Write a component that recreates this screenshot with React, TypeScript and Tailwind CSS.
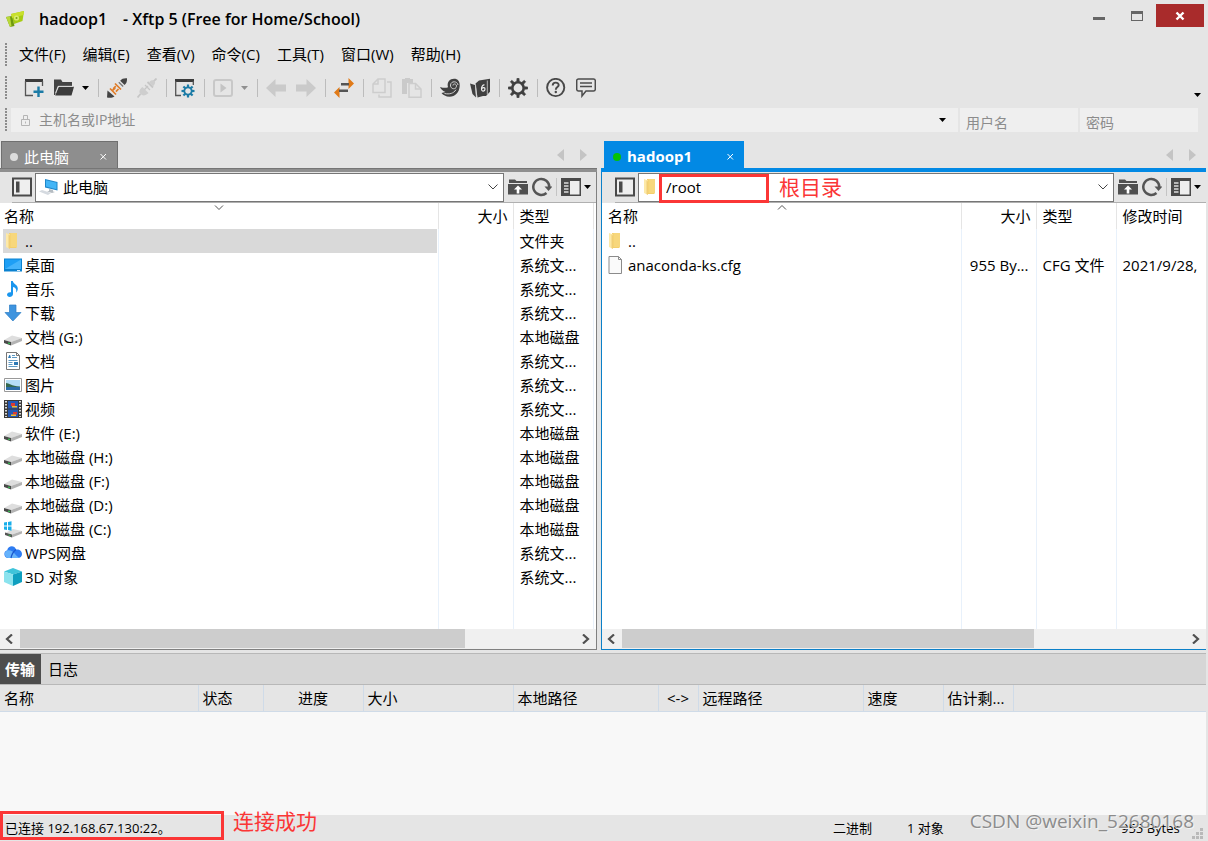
import React from "react";

type IconProps = { className?: string };

/* ---------- toolbar icons (20 x 20) ---------- */

const Svg = ({ children, className = "size-5" }: { children: React.ReactNode; className?: string }) => (
  <svg viewBox="0 0 20 20" className={`shrink-0 ${className}`} fill="none" aria-hidden="true">
    {children}
  </svg>
);

const NewIcon = () => (
  <Svg>
    <path d="M1 1h18v3H1z" fill="#3c3c3c" />
    <path d="M1.500 3v14.500H9M18.500 3v5" stroke="#555" strokeWidth="1.300" />
    <path d="M14.500 8.500v10.500M9.500 13.700h10" stroke="#1b7ba6" strokeWidth="2.400" />
  </Svg>
);
const OpenIcon = () => (
  <Svg>
    <path d="M0 1.500h7l1.500 2.500H18V8H4l-3 9H0z" fill="#444" />
    <path d="M4.800 8.800H20l-2.500 8.700H1.200z" fill="#3c3c3c" />
    <path d="M1.500 15L4.200 8.300H19" stroke="#e5e5e5" strokeWidth=".8" />
  </Svg>
);
const ConnectIcon = () => (
  <Svg>
    <path d="M13.200 2.800C14.500.6 17 0 20 .2c.2 3-.5 5.500-2.500 6.800z" fill="#444" />
    <path d="M.5 12.500l7 6C5.500 20 2.500 20 0 19.500z" fill="#444" />
    <path d="M11.800 4.200l4.400 4.300" stroke="#777" strokeWidth="1.300" />
    <path d="M8 5.500l6 6M3 10.500l6 6" stroke="#e07c28" strokeWidth="1.700" />
    <path d="M8.800 8.200l-2.600 2.600M11.500 11l-2.600 2.600M5.500 12.300l2.800-2.300" stroke="#e07c28" strokeWidth="1.700" />
  </Svg>
);
const DisconnectIcon = () => (
  <Svg>
    <path d="M10.500 4l5.500 5.500M14.500 5.500L19.500.5M3.500 16L.5 19.500" stroke="#c6c6c6" strokeWidth="1.800" />
    <path d="M12 4.500c2-3 4.500-2.500 5.500-1.500s1 3-1.500 5.200zM5.500 9l6 6c-3 3-6 3-8 1s-1-5 2-7z" fill="#cecece" />
    <path d="M8 7l5 5M7.500 11.500l3.500-3.500" stroke="#c6c6c6" strokeWidth="1.300" />
  </Svg>
);

const teeth = [0, 45, 90, 135, 180, 225, 270, 315];

const PropsIcon = () => (
  <Svg>
    <path d="M0 1h19v3H0z" fill="#3c3c3c" />
    <path d="M.7 3v14.500H6M18.300 3v4" stroke="#555" strokeWidth="1.300" />
    <g transform="translate(13 13)">
      <circle r="3.700" stroke="#1b7ba6" strokeWidth="1.800" />
      {teeth.map((a) => (
        <path key={a} d="M0-3.800V-6.500" stroke="#1b7ba6" strokeWidth="2.200" transform={`rotate(${a})`} />
      ))}
    </g>
  </Svg>
);
const PlayIcon = () => (
  <Svg>
    <rect x="1" y="2" width="18" height="16" rx="2" stroke="#c8c8c8" strokeWidth="2" />
    <path d="M7.500 5.500L13.500 10l-6 4.500z" fill="#c4c4c4" />
  </Svg>
);
const BackIcon = () => (
  <Svg>
    <path d="M0 10L9.500 1v5.500H20v7H9.500V19z" fill="#cacaca" />
  </Svg>
);
const ForwardIcon = () => (
  <Svg>
    <path d="M20 10L10.500 1v5.500H0v7h10.500V19z" fill="#cacaca" />
  </Svg>
);
const TransferIcon = () => (
  <Svg>
    <path d="M14.500 0L20 5.500 14.500 11zM5.500 9L0 14.500 5.500 20z" fill="#e07a18" />
    <path d="M7 5h8v2.500H7zM5 11.500h9V14H5z" fill="#555" />
  </Svg>
);
const CopyIcon = () => (
  <Svg>
    <path d="M6 1h7v13.500H1V6z" stroke="#cdcdcd" strokeWidth="1.500" />
    <path d="M6 1v5H1M15 4h4v15H7v-2.500" stroke="#cdcdcd" strokeWidth="1.500" />
  </Svg>
);
const PasteIcon = () => (
  <Svg>
    <path d="M0 1h3V0h5v1h3v4H5v11H0z" fill="#cacaca" />
    <path d="M7 5.500h6.500L19 11v8.200H7z" fill="#e5e5e5" stroke="#cdcdcd" strokeWidth="1.500" />
    <path d="M13.500 5.500V11H19" stroke="#cdcdcd" strokeWidth="1.500" />
  </Svg>
);
const SnailIcon = () => (
  <Svg>
    <path d="M0 9c3.500 1 6 1.200 8 .2C6.500 4 10 .8 14 .8c4 0 6 2.700 5.700 7.200-.4 6.500-4.500 10.700-10.200 10.700-3.500 0-6.500-1.700-8-3.700l4-1C3 13 1 11.500 0 9z" fill="#404040" />
    <path d="M18 7c-.5-4-7-4.500-7.500 0-.3 4.500 5.700 5 6 1.200.2-2.700-3.700-3-3.500-.7M4.500 15.500c5 1 9 0 11.500-3.800" stroke="#cfcfcf" strokeWidth="1" />
  </Svg>
);
const FtpIcon = () => (
  <Svg>
    <path d="M5.500 5.500L9 2.500 20 .8v13L16 18H13l-5.500 1.500z" fill="#404040" />
    <path d="M0 5.500L5 7l1 12.500L2.500 16z" fill="#404040" />
    <path d="M5.500 6.500l1.200 12.500M17.300 2.500v14" stroke="#cfcfcf" strokeWidth=".8" />
    <path d="M14.500 7c-1.500-.3-3 1.300-3 3.800 0 3.200 3.500 2.700 3.500.2 0-1.800-2-1.800-3-.5" stroke="#eee" strokeWidth="1.200" />
  </Svg>
);
const GearIcon = () => (
  <Svg>
    <g transform="translate(10 10)">
      <circle r="5.700" stroke="#3f3f3f" strokeWidth="2.600" />
      {teeth.map((a) => (
        <path key={a} d="M-1.300-6.500L-1-9.800H1L1.300-6.500z" fill="#3f3f3f" stroke="#3f3f3f" strokeWidth=".6" transform={`rotate(${a})`} />
      ))}
    </g>
  </Svg>
);
const HelpIcon = () => (
  <Svg>
    <circle cx="9.700" cy="9.500" r="8.600" stroke="#484848" strokeWidth="1.900" />
    <path d="M6.700 7.500c0-3.800 6-3.800 6-.4 0 2-2.900 2-2.900 4.600" stroke="#484848" strokeWidth="1.900" />
    <circle cx="9.800" cy="14" r="1.200" fill="#484848" />
  </Svg>
);
const ChatIcon = () => (
  <Svg>
    <path d="M2.500 1h15a1.800 1.800 0 011.800 1.800v8.400a1.800 1.800 0 01-1.800 1.800H10l-4 5v-5H2.500a1.800 1.800 0 01-1.800-1.800V2.800A1.800 1.800 0 012.500 1z" stroke="#4c4c4c" strokeWidth="1.500" />
    <path d="M4 5h12M4 8.500h12" stroke="#4c4c4c" strokeWidth="1.400" />
  </Svg>
);

/* ---------- pane icons ---------- */

const SideIcon = () => (
  <Svg>
    <rect x="1" y="1.500" width="18" height="17" stroke="#4a4a4a" strokeWidth="2" fill="#efefef" />
    <path d="M4 4.500h3.500v11H4z" fill="#4a4a4a" />
  </Svg>
);
const UpFolderIcon = () => (
  <Svg>
    <path d="M1 2.500h6L8.500 4H19v2H1zM0 7h20v10.500H0z" fill="#505050" />
    <path d="M10 8.500l4 4h-2.700v4H8.700v-4H6z" fill="#fff" />
  </Svg>
);
const RefreshIcon = () => (
  <Svg>
    <path d="M14.500 16A8 8 0 1117.300 10" stroke="#555" strokeWidth="2.500" />
    <path d="M12.500 9.500H20.500l-4 4.500z" fill="#555" />
  </Svg>
);
const ViewIcon = () => (
  <Svg>
    <path d="M0 1h20v18H0z" fill="#4a4a4a" />
    <path d="M9 4h9.500v13.500H9z" fill="#eee" />
    <path d="M3 6h4.500M3 9h4.500M3 12h4.500M3 15h4.500" stroke="#ddd" strokeWidth="1.300" />
  </Svg>
);
const Caret = ({ className = "text-black" }: IconProps) => (
  <svg viewBox="0 0 7 4" className={`h-1 w-[7px] shrink-0 ${className}`} aria-hidden="true">
    <path d="M0 0h7L3.500 4z" fill="currentColor" />
  </svg>
);

/* ---------- file icons (18 x 18) ---------- */

const FSvg = ({ children }: { children: React.ReactNode }) => (
  <svg viewBox="0 0 18 18" className="size-[18px] shrink-0" fill="none" aria-hidden="true">
    {children}
  </svg>
);
const Folder = () => (
  <FSvg>
    <path d="M5 1h7.500v15H5z" fill="#f4cf6a" />
    <path d="M6.500 1h6.500v14H6.500z" fill="#f7d77c" />
    <path d="M2 1l4 1.500V17l-4-2z" fill="#fde9a8" />
    <path d="M4.500 2.500L6 3.500V17l-1.500-1z" fill="#e3ae37" opacity=".45" />
  </FSvg>
);
const FileIcon = () => (
  <FSvg>
    <path d="M2 .5h9.500l3 3v14H2z" fill="#fafafa" stroke="#8b8b8b" />
    <path d="M11.500.5v3h3" stroke="#8b8b8b" />
  </FSvg>
);
const Desktop = () => (
  <FSvg>
    <path d="M0 2.500h18v13H0z" fill="#0b82d0" />
    <path d="M1 3.500h16v9.500H1z" fill="#1e9ff5" />
    <path d="M1 13L17 3.500V13z" fill="#45b4fb" />
    <path d="M13 14.500h3" stroke="#d8efff" />
  </FSvg>
);
const Music = () => (
  <FSvg>
    <path d="M7 1h1.800c.5 3 5 3.500 5 7.500 0 2-1 3.500-1.800 4 1.200-3.500-1-5-3-5.500V14c0 2-1.800 3-3.300 3S3 16 3 14.800 4.300 12 7 12.300z" fill="#1a96ee" />
  </FSvg>
);
const Download = () => (
  <FSvg>
    <path d="M5.500 1h6.500v7.500h5L8.900 17 1 8.500h4.500z" fill="#3e94df" stroke="#2b7cc4" strokeWidth=".7" />
  </FSvg>
);
const Disk = () => (
  <FSvg>
    <path d="M0 12l8-4.500L18 10 7 14z" fill="#dedede" />
    <path d="M0 12l7 2v3.500l-7-2.500z" fill="#4a4a4a" />
    <path d="M7 14l11-4v3L7 17.500z" fill="#b3b3b3" />
    <path d="M4 15l2 .6" stroke="#35c452" strokeWidth="1.300" />
  </FSvg>
);
const SystemDisk = () => (
  <FSvg>
    <path d="M2 12.500l7-3.500 9 2-10 3.500z" fill="#dedede" />
    <path d="M1 12.500l7 2v3L1 15z" fill="#555" />
    <path d="M8 14.500L18 11v2.500L8 17.500z" fill="#b3b3b3" />
    <path d="M4.500 15l2 .6" stroke="#35c452" />
    <path d="M0 2.500L3 2v3.500H0zM4 2l3.500-.7v4.200H4zM0 6.500h3V10l-3-.5zM4 6.500h3.500v4.200L4 10z" fill="#18aeea" />
  </FSvg>
);
const Doc = () => (
  <FSvg>
    <path d="M2.500.5h10l3 3v14h-13z" fill="#fff" stroke="#777" />
    <path d="M12.500.5v3h3" stroke="#777" />
    <path d="M8 3.500h3M8 5.500h5M4.500 8.500h9M4.500 10.500h4M4.500 12.500h4M4.500 14.500h9" stroke="#5d99c4" />
    <path d="M4 6l1.300-3h.8L7 6M10 10h4v3h-4z" fill="#2d79b5" />
  </FSvg>
);
const Picture = () => (
  <FSvg>
    <path d="M.5 2.500h17v13H.5z" fill="#fff" stroke="#999" />
    <path d="M2 4h14v10H2z" fill="#b5def7" />
    <path d="M2 7c3 0 5 3 14 3.500v1H2z" fill="#35694f" />
    <path d="M2 11h14v3H2z" fill="#2c6da8" />
  </FSvg>
);
const Video = () => (
  <FSvg>
    <path d="M0 0h18v18H0z" fill="#3a3a3a" />
    <path d="M4 1h10v7.500H4zM4 9.500h10V17H4z" fill="#2459b5" />
    <path d="M7 3h4v3H7zM9 12h4v2.500H9z" fill="#db3b32" />
    <path d="M8 6h5v1.500H8zM7 14.500h5v1.500H7z" fill="#f4bb2a" />
    <path d="M2 1v16M16 1v16" stroke="#eee" strokeWidth="1.800" strokeDasharray="1.500 1.500" />
  </FSvg>
);
const Cloud = () => (
  <FSvg>
    <path d="M4 14a4 4 0 01-.8-7.800C4 1.500 10.500.5 12 5.500c3.500-.5 6 1.700 6 4.500 0 2.500-1.800 4-4 4z" fill="#2d7cf2" />
    <path d="M3 6.500c3-1 6 1 8 3.500s4.500 4 4.500 4H4a4 4 0 01-1-7.500z" fill="#65b2fb" />
    <path d="M7 14c1-5 3-7 5-8.500" stroke="#1857ce" strokeWidth="1.300" />
  </FSvg>
);
const Cube = () => (
  <FSvg>
    <path d="M9 0l9 3.500L9 6.500 0 3.500z" fill="#3fc4da" />
    <path d="M0 3.500l9 3V18l-9-4z" fill="#8be3ee" />
    <path d="M18 3.500l-9 3V18l9-4z" fill="#0f9fbf" />
  </FSvg>
);
const Computer = () => (
  <svg viewBox="0 0 20 18" className="h-[18px] w-5 shrink-0" fill="none" aria-hidden="true">
    <path d="M6 1l12.500 3v8.500L6 9.500z" fill="#1f86c9" />
    <path d="M7 2.300l10.500 2.500v6.400L7 8.600z" fill="#43b5f6" />
    <path d="M10 11l4 1v1.500l2 .5-3 1-5-1.500 2-.5z" fill="#b5bcc2" />
    <path d="M0 13.500l3-1.500 9 3-3 2z" fill="#d5dae0" />
  </svg>
);

/* ---------- data ---------- */

type Row = { icon: () => React.ReactElement; cells: string[] };

const dir = "系统文...";
const disk = "本地磁盘";

const localRows: Row[] = [
  { icon: Folder, cells: ["..", "", "文件夹", ""] },
  { icon: Desktop, cells: ["桌面", "", dir, ""] },
  { icon: Music, cells: ["音乐", "", dir, ""] },
  { icon: Download, cells: ["下载", "", dir, ""] },
  { icon: Disk, cells: ["文档 (G:)", "", disk, ""] },
  { icon: Doc, cells: ["文档", "", dir, ""] },
  { icon: Picture, cells: ["图片", "", dir, ""] },
  { icon: Video, cells: ["视频", "", dir, ""] },
  { icon: Disk, cells: ["软件 (E:)", "", disk, ""] },
  { icon: Disk, cells: ["本地磁盘 (H:)", "", disk, ""] },
  { icon: Disk, cells: ["本地磁盘 (F:)", "", disk, ""] },
  { icon: Disk, cells: ["本地磁盘 (D:)", "", disk, ""] },
  { icon: SystemDisk, cells: ["本地磁盘 (C:)", "", disk, ""] },
  { icon: Cloud, cells: ["WPS网盘", "", dir, ""] },
  { icon: Cube, cells: ["3D 对象", "", dir, ""] },
];

const remoteRows: Row[] = [
  { icon: Folder, cells: ["..", "", "", ""] },
  { icon: FileIcon, cells: ["anaconda-ks.cfg", "955 By...", "CFG 文件", "2021/9/28, "] },
];

const menus = ["文件(F)", "编辑(E)", "查看(V)", "命令(C)", "工具(T)", "窗口(W)", "帮助(H)"];

/* ---------- pieces ---------- */

const Grip = () => <span className="ml-[5px] h-6 w-0.5 shrink-0 bg-[repeating-linear-gradient(to_bottom,#8c8c8c_0_2px,transparent_2px_3px)]" />;

const ToolButton = ({ label, disabled, children }: { label: string; disabled?: boolean; children: React.ReactNode }) => (
  <button type="button" aria-label={label} disabled={disabled} className="flex h-8 w-[30px] items-center justify-center">
    {children}
  </button>
);
const CaretButton = ({ label, disabled }: { label: string; disabled?: boolean }) => (
  <button type="button" aria-label={label} disabled={disabled} className="flex h-8 w-[15px] items-center pl-[3px]">
    <Caret className={disabled ? "text-[#909090]" : "text-black"} />
  </button>
);
const Sep = () => (
  <span className="flex w-2 justify-center">
    <span className="h-[18px] w-px bg-[#bcbcbc]" />
  </span>
);

function FileTable({ rows, cols, name, selected, divider }: { rows: Row[]; cols: string[]; name: string; selected: number; divider: "down" | "up" }) {
  const heads = ["名称", "大小", "类型", name === "local" ? "" : "修改时间"];
  const headPad = name === "local" ? "pl-1" : "pl-1.5";
  const cellPad = name === "local" ? "pl-[3px]" : "pl-1";
  return (
    <div className="relative min-h-0 flex-1 overflow-hidden bg-white">
      <svg
        viewBox="0 0 10 6"
        className={`absolute top-0.5 h-1.5 w-2.5 text-[#555] ${divider === "down" ? "left-[214px]" : "left-[175px]"}`}
        fill="none"
        aria-hidden="true"
      >
        <path d={divider === "down" ? "M1 .5L5 4.500l4-4" : "M1 4.500l4-4 4 4"} stroke="currentColor" />
      </svg>
      <table className="h-full w-full table-fixed border-collapse text-[15px] leading-6 whitespace-nowrap">
        <colgroup>
          <col />
          {cols.map((c, i) => (
            <col key={i} className={c} />
          ))}
        </colgroup>
        <thead>
          <tr className="h-[26px]">
            {heads.map((h, i) => (
              <th
                key={i}
                className={`overflow-hidden p-0 font-normal ${i === 1 ? "pr-[5px] text-right" : i === 0 ? `${headPad} text-left` : "pl-1.5 text-left"} ${i > 0 ? "border-l border-[#e5e5e5]" : ""}`}
              >
                {h}
              </th>
            ))}
          </tr>
        </thead>
        <tbody>
          {rows.map((r, k) => {
            const Icon = r.icon;
            return (
              <tr key={k} className="h-6">
                {r.cells.map((c, i) => (
                  <td
                    key={i}
                    className={`overflow-hidden p-0 ${i === 1 ? "pr-[7px] text-right" : i === 0 ? `pr-px ${cellPad}` : "pl-1.5"} ${i > 0 ? "border-l border-[#e8f1fb]" : ""}`}
                  >
                    {i === 0 ? (
                      <span className={`flex h-6 items-center gap-[3px] pl-px ${k === selected ? "bg-[#d9d9d9]" : ""}`}>
                        <Icon />
                        {c}
                      </span>
                    ) : (
                      c
                    )}
                  </td>
                ))}
              </tr>
            );
          })}
          <tr aria-hidden="true">
            {heads.map((_, i) => (
              <td key={i} className={i > 0 ? "border-l border-[#e8f1fb]" : ""} />
            ))}
          </tr>
        </tbody>
      </table>
    </div>
  );
}

const Chevron = ({ d }: { d: string }) => (
  <svg viewBox="0 0 10 10" className="size-2.5" fill="none" aria-hidden="true">
    <path d={d} stroke="#505050" strokeWidth="2.200" />
  </svg>
);

function ScrollBar({ label, thumb }: { label: string; thumb: string }) {
  return (
    <div className="flex h-5 shrink-0 bg-[#f0f0f0] pb-px" role="group" aria-label={label}>
      <button type="button" aria-label="向左滚动" className="flex w-5 items-center justify-center">
        <Chevron d="M7 .5L2 5l5 4.500" />
      </button>
      <div className="flex-1">
        <div className={`h-full bg-[#cdcdcd] ${thumb}`} />
      </div>
      <button type="button" aria-label="向右滚动" className="flex w-5 items-center justify-center">
        <Chevron d="M2 .5L7 5 2 9.500" />
      </button>
    </div>
  );
}

const TabArrows = () => (
  <span className="ml-auto flex items-center gap-3.5 self-center">
    <button type="button" aria-label="上一个标签">
      <svg viewBox="0 0 8 12" className="h-3 w-2" aria-hidden="true">
        <path d="M7 0v12L0 6z" fill="#c4c4c4" />
      </svg>
    </button>
    <button type="button" aria-label="下一个标签">
      <svg viewBox="0 0 8 12" className="h-3 w-2" aria-hidden="true">
        <path d="M1 0v12l7-6z" fill="#c4c4c4" />
      </svg>
    </button>
  </span>
);

const TabClose = () => (
  <button type="button" aria-label="关闭标签" className="ml-auto pt-1">
    <svg viewBox="0 0 8 8" className="size-2" fill="none" aria-hidden="true">
      <path d="M1.500 1l5.500 5.500M7 1L1.500 6.500" stroke="#fff" />
    </svg>
  </button>
);

function PathBar({ id, label, value, icon, children }: { id: string; label: string; value: string; icon: React.ReactNode; children?: React.ReactNode }) {
  return (
    <div className="flex h-[31px] items-center border-b border-[#b0b0b0] bg-[#e5e5e5] pr-[5px]">
      <button type="button" aria-label="文件夹树">
        <SideIcon />
      </button>
      <div className="relative ml-[3px] flex h-[29px] min-w-0 flex-1 items-center border border-[#767676] bg-white pl-[3px]">
        <span className="flex w-5 shrink-0">{icon}</span>
        <label htmlFor={id} className="sr-only">
          {label}
        </label>
        <select id={id} defaultValue={value} className="h-full min-w-0 flex-1 appearance-none bg-transparent pl-1 text-[15px] leading-6 outline-none">
          <option value={value}>{value}</option>
        </select>
        <svg viewBox="0 0 10 6" className="pointer-events-none absolute right-[5px] h-1.5 w-2.5" fill="none" aria-hidden="true">
          <path d="M.5.5L5 5 9.500.5" stroke="#444" />
        </svg>
        {children}
      </div>
      <div className="flex items-center pl-1">
        <button type="button" aria-label="上级文件夹">
          <UpFolderIcon />
        </button>
        <button type="button" aria-label="刷新" className="ml-1">
          <RefreshIcon />
        </button>
        <span className="mx-1 h-[18px] w-px bg-[#c4c4c4]" />
        <button type="button" aria-label="视图" className="flex items-center gap-[3px]">
          <ViewIcon />
          <Caret />
        </button>
      </div>
    </div>
  );
}

const queueCols = [
  { t: "名称", w: "w-[198px]" },
  { t: "状态", w: "w-[65px]" },
  { t: "进度", w: "w-[100px]", c: true },
  { t: "大小", w: "w-[150px]" },
  { t: "本地路径", w: "w-[145px]" },
  { t: "<->", w: "w-10", c: true },
  { t: "远程路径", w: "w-[165px]" },
  { t: "速度", w: "w-20" },
  { t: "估计剩...", w: "w-[70px]" },
];

export default function App() {
  return (
    <div className="flex h-screen min-h-[520px] flex-col bg-[#e5e5e5] font-['Open_Sans','Noto_Sans_CJK_SC',sans-serif] text-[15px] text-black">
      {/* title bar */}
      <header className="flex h-[38px] shrink-0 items-start pr-1">
        <h1 className="flex h-full flex-1 items-center pl-[5px] text-[16px] font-semibold">
          <svg viewBox="0 0 20 18" className="h-[18px] w-5" fill="none" aria-hidden="true">
            <path d="M6 4l13-3-1.500 10L9 14z" fill="#a7cc12" />
            <path d="M1 7l6-1 2.500 10L5 17z" fill="#6f9a0c" />
            <path d="M1 7l4-.5L6.500 16 5 17z" fill="#b9d83a" />
            <path d="M6 4l13-3-.5 4L7 8z" fill="#c9e02c" />
            <circle cx="11.500" cy="8" r="2.600" fill="#d9ec70" />
            <circle cx="11.500" cy="8" r="1" fill="#7da310" />
          </svg>
          <span className="pl-3.5">hadoop1</span>
          <span className="pl-4">- Xftp 5 (Free for Home/School)</span>
        </h1>
        <div className="flex h-[27px] pt-1">
          <button type="button" aria-label="最小化" className="flex w-[38px] items-center justify-center pt-1.5">
            <span className="h-[3px] w-3 bg-[#666]" />
          </button>
          <button type="button" aria-label="最大化" className="flex w-[38px] items-center justify-center">
            <span className="h-2.5 w-3 border border-t-[3px] border-[#666]" />
          </button>
          <button type="button" aria-label="关闭" className="flex w-12 items-center justify-center bg-[#a92b2b]">
            <svg viewBox="0 0 10 10" className="size-2.5" fill="none" aria-hidden="true">
              <path d="M1.500 1.500l7 7M8.500 1.500l-7 7" stroke="#fff" strokeWidth="2.400" />
            </svg>
          </button>
        </div>
      </header>

      {/* menu */}
      <nav className="flex h-[34px] shrink-0 items-start" aria-label="菜单">
        <span className="flex pt-[5px]">
          <Grip />
        </span>
        <div className="flex gap-[17px] pt-1 pl-3 leading-6">
          {menus.map((m) => (
            <button type="button" key={m}>
              {m}
            </button>
          ))}
        </div>
      </nav>

      {/* toolbar */}
      <div className="flex h-8 shrink-0 items-center" role="toolbar" aria-label="工具栏">
        <Grip />
        <div className="flex items-center pl-3">
          <ToolButton label="新建"><NewIcon /></ToolButton>
          <ToolButton label="打开"><OpenIcon /></ToolButton>
          <CaretButton label="打开列表" />
          <Sep />
          <ToolButton label="重新连接"><ConnectIcon /></ToolButton>
          <ToolButton label="断开" disabled><DisconnectIcon /></ToolButton>
          <Sep />
          <ToolButton label="属性"><PropsIcon /></ToolButton>
          <Sep />
          <ToolButton label="执行" disabled><PlayIcon /></ToolButton>
          <CaretButton label="执行列表" disabled />
          <Sep />
          <ToolButton label="后退" disabled><BackIcon /></ToolButton>
          <ToolButton label="前进" disabled><ForwardIcon /></ToolButton>
          <Sep />
          <ToolButton label="传输"><TransferIcon /></ToolButton>
          <Sep />
          <ToolButton label="复制" disabled><CopyIcon /></ToolButton>
          <ToolButton label="粘贴" disabled><PasteIcon /></ToolButton>
          <Sep />
          <ToolButton label="Xshell"><SnailIcon /></ToolButton>
          <ToolButton label="Xftp"><FtpIcon /></ToolButton>
          <Sep />
          <ToolButton label="选项"><GearIcon /></ToolButton>
          <Sep />
          <ToolButton label="帮助"><HelpIcon /></ToolButton>
          <ToolButton label="反馈"><ChatIcon /></ToolButton>
        </div>
        <button type="button" aria-label="更多" className="mr-[7px] ml-auto self-end pb-[7px]">
          <Caret />
        </button>
      </div>

      {/* quick connect */}
      <form className="mt-1 flex h-6 shrink-0 gap-0.5 pr-2.5 text-[14px]">
        <Grip />
        <label className="ml-0.5 flex min-w-0 flex-1 items-center bg-[#efefef] pr-3 pl-2.5">
          <span className="sr-only">主机名或IP地址</span>
          <svg viewBox="0 0 9 11" className="h-[11px] w-[9px] shrink-0" fill="none" aria-hidden="true">
            <path d="M.5 4.500h8v6h-8zM2.500 4.500V.500h4v4M4.500 6.500v2" stroke="#b5b5b5" />
          </svg>
          <input placeholder="主机名或IP地址" className="h-6 min-w-0 flex-1 bg-transparent pl-[9px] leading-6 outline-none placeholder:text-[#8c8c8c]" />
          <Caret />
        </label>
        <input aria-label="用户名" placeholder="用户名" className="w-[118px] bg-[#efefef] px-1.5 pt-1 outline-none placeholder:text-[#8c8c8c]" />
        <input aria-label="密码" type="password" placeholder="密码" className="w-[118px] bg-[#efefef] px-1.5 pt-1 outline-none placeholder:text-[#8c8c8c]" />
      </form>

      {/* panes */}
      <main className="mt-[9px] mr-0.5 grid min-h-0 flex-1 grid-cols-[597fr_605fr] grid-rows-[minmax(0,1fr)] gap-1">
        <section className="flex min-w-0 flex-col" aria-label="本地">
          <div className="flex h-[27px] pr-2.5 pl-px">
            <div className="flex w-[117px] items-center border border-b-0 border-[#707070] bg-[#8e8e8e] pr-2.5 pl-2 text-white">
              <span className="mt-1 size-2 rounded-full bg-[#dcdcdc]" />
              <span className="pt-1 pl-1.5">此电脑</span>
              <TabClose />
            </div>
            <TabArrows />
          </div>
          <div className="h-1 shrink-0 border-t border-[#767676] bg-[#8f8f8f]" />
          <div className="flex min-h-0 flex-1 flex-col border-r border-b border-[#808080]">
            <div className="bg-[#e5e5e5] pl-3">
              <PathBar id="local-path" label="本地路径" value="此电脑" icon={<Computer />} />
            </div>
            <FileTable name="local" rows={localRows} cols={["w-[75px]", "w-20", "w-[3px]"]} selected={0} divider="down" />
            <ScrollBar label="本地滚动条" thumb="w-4/5" />
          </div>
        </section>

        <section className="flex min-w-0 flex-col" aria-label="远程">
          <div className="flex h-[27px] pr-2.5 pl-[3px]">
            <div className="flex w-[140px] items-center bg-[#0289e4] pr-2.5 pl-[9px] text-white">
              <span className="mt-1 size-2 rounded-full bg-[#06c206]" />
              <span className="pt-1 pl-1.5 font-bold">hadoop1</span>
              <TabClose />
            </div>
            <TabArrows />
          </div>
          <div className="h-1 shrink-0 bg-[#0289e4]" />
          <div className="flex min-h-0 flex-1 flex-col border-b border-l border-[#0c80c8]">
            <div className="bg-[#e5e5e5] pl-[13px]">
              <PathBar id="remote-path" label="远程路径" value="/root" icon={<Folder />}>
                <span className="pointer-events-none absolute top-0 left-5 h-[29px] w-[110px] border-[3px] border-[#fb3636]" />
                <span className="pointer-events-none absolute left-[140px] text-[21px] leading-7 text-[#fb3636]">根目录</span>
              </PathBar>
            </div>
            <FileTable name="remote" rows={remoteRows} cols={["w-[75px]", "w-20", "w-[90px]"]} selected={-1} divider="up" />
            <ScrollBar label="远程滚动条" thumb="w-[73%]" />
          </div>
        </section>
      </main>

      {/* transfer queue */}
      <section className="mt-[3px] mr-0.5 shrink-0 border-t border-[#b8b8b8]" aria-label="传输队列">
        <div className="flex h-[31px] border-b border-[#b8b8b8] bg-[#d6d6d6]">
          <button type="button" className="w-[41px] bg-[#4d4d4d] pr-px font-bold text-white">传输</button>
          <button type="button" className="px-[7px]">日志</button>
        </div>
        <div className="h-[130px] overflow-hidden bg-[#f8f8f8]">
          <table className="w-full table-fixed border-collapse whitespace-nowrap">
            <thead>
              <tr className="h-[26px] border-b border-[#cfdbe8] bg-[#e5e5e5]">
                {queueCols.map((q) => (
                  <th key={q.t} className={`border-r border-[#cfdbe8] p-0 font-normal ${q.w} ${q.c ? "text-center" : "pl-1 text-left"}`}>
                    {q.t}
                  </th>
                ))}
                <th />
              </tr>
            </thead>
          </table>
        </div>
      </section>

      {/* status bar */}
      <footer className="relative flex h-[26px] shrink-0 items-center pt-0.5 pr-[5px] pl-[5px] text-[13px]">
        <span className="flex-1">已连接 192.168.67.130:22。</span>
        <span className="w-[74px]">二进制</span>
        <span className="w-[214px]">1 对象</span>
        <span className="w-[71px]">955 Bytes</span>
        <svg viewBox="0 0 11 11" className="mt-2 size-[11px]" fill="#b9b9b9" aria-hidden="true">
          <path d="M8 0h3v3H8zM4 4h3v3H4zM8 4h3v3H8zM0 8h3v3H0zM4 8h3v3H4zM8 8h3v3H8z" />
        </svg>
        <span className="pointer-events-none absolute bottom-px left-0 h-[29px] w-56 border-[3px] border-[#fb3636]" />
        <span className="pointer-events-none absolute bottom-1.5 left-[233px] text-[21px] leading-7 text-[#fb3636]">连接成功</span>
        <span className="pointer-events-none absolute right-3.5 bottom-1.5 text-[19px] leading-7 whitespace-nowrap text-[#8c8c8c] [text-shadow:1px_1px_0_#f4f4f4]">
          CSDN @weixin_52680168
        </span>
      </footer>
    </div>
  );
}
